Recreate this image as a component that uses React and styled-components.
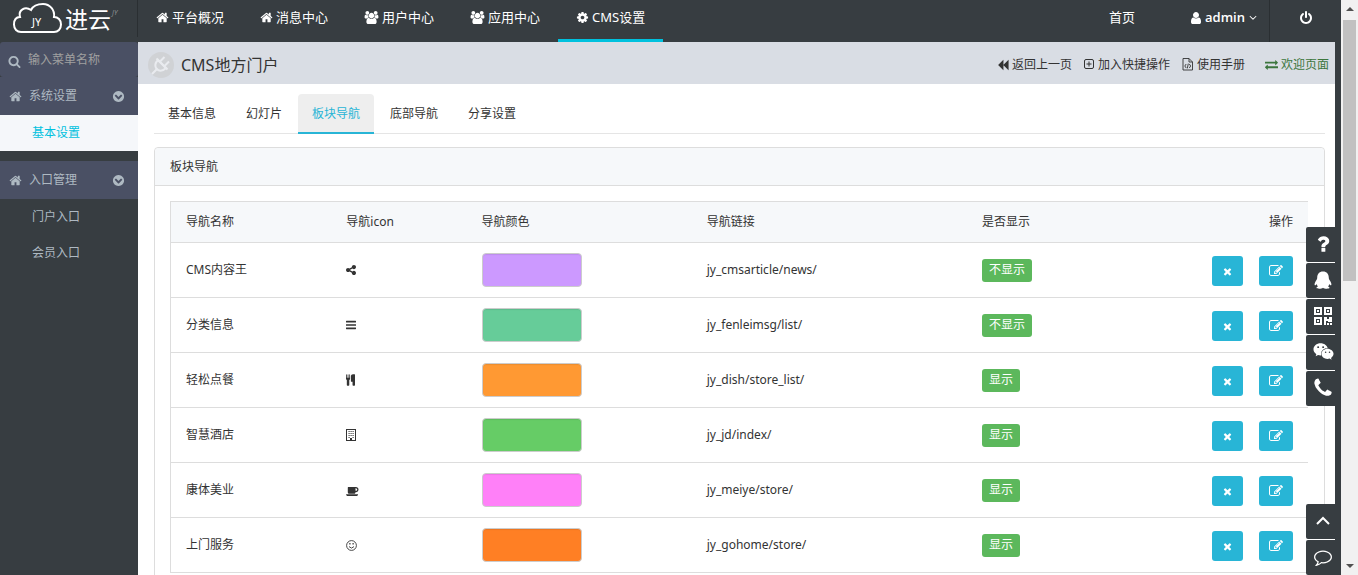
import styled, { createGlobalStyle } from 'styled-components';
import { FaWeixin } from 'react-icons/fa';

const GlobalStyle = createGlobalStyle`
  * {
    box-sizing: border-box;
  }

  body {
    margin: 0;
    overflow: hidden;
    color: #333333;
    background: #373d41;
    font-family: "Noto Sans", "Noto Sans CJK SC", sans-serif;
    font-size: 12px;
    line-height: 18px;
  }

  a {
    color: inherit;
    text-decoration: none;
  }

  button, input {
    font: inherit;
  }
`;

const paths = {
  home: 'M1472 992v480q0 26-19 45t-45 19h-384v-384h-256v384h-384q-26 0-45-19t-19-45v-480q0-1 .5-3t.5-3l575-474 575 474q1 2 1 6zm223-69l-62 74q-8 9-21 11h-3q-13 0-21-7l-692-577-692 577q-12 8-24 7-13-2-21-11l-62-74q-8-10-7-23.5t11-21.5l719-599q32-26 76-26t76 26l244 204v-195q0-14 9-23t23-9h192q14 0 23 9t9 23v408l219 182q10 8 11 21.5t-7 23.5z',
  users: 'M657 896q-162 5-265 128h-134q-82 0-138-40.5t-56-118.5q0-353 124-353 6 0 43.5 21t97.5 42.5 119 21.5q67 0 133-23-5 37-5 66 0 139 81 256zm1071 637q0 120-73 189.5t-194 69.5h-874q-121 0-194-69.5t-73-189.5q0-53 3.5-103.5t14-109 26.5-108.5 43-97.5 62-81 85.5-53.5 111.5-20q10 0 43 21.5t73 48 107 48 135 21.5 135-21.5 107-48 73-48 43-21.5q61 0 111.5 20t85.5 53.5 62 81 43 97.5 26.5 108.5 14 109 3.5 103.5zm-1024-1277q0 106-75 181t-181 75-181-75-75-181 75-181 181-75 181 75 75 181zm704 384q0 159-112.5 271.5t-271.5 112.5-271.5-112.5-112.5-271.5 112.5-271.5 271.5-112.5 271.5 112.5 112.5 271.5zm576 225q0 78-56 118.5t-138 40.5h-134q-103-123-265-128 81-117 81-256 0-29-5-66 66 23 133 23 59 0 119-21.5t97.5-42.5 43.5-21q124 0 124 353zm-128-609q0 106-75 181t-181 75-181-75-75-181 75-181 181-75 181 75 75 181z',
  cog: 'M1152 896q0-106-75-181t-181-75-181 75-75 181 75 181 181 75 181-75 75-181zm512-109v222q0 12-8 23t-20 13l-185 28q-19 54-39 91 35 50 107 138 10 12 10 25t-9 23q-27 37-99 108t-94 71q-12 0-26-9l-138-108q-44 23-91 38-16 136-29 186-7 28-36 28h-222q-14 0-24.5-8.5t-11.5-21.5l-28-184q-49-16-90-37l-141 107q-10 9-25 9-14 0-25-11-126-114-165-168-7-10-7-23 0-12 8-23 15-21 51-66.5t54-70.5q-27-50-41-99l-183-27q-13-2-21-12.5t-8-23.5v-222q0-12 8-23t19-13l186-28q14-46 39-92-40-57-107-138-10-12-10-24 0-10 9-23 26-36 98.5-107.5t94.5-71.5q13 0 26 10l138 107q44-23 91-38 16-136 29-186 7-28 36-28h222q14 0 24.5 8.5t11.5 21.5l28 184q49 16 90 37l142-107q9-9 24-9 13 0 25 10 129 119 165 170 7 8 7 22 0 12-8 23-15 21-51 66.5t-54 70.5q26 50 41 98l183 28q13 2 21 12.5t8 23.5z',
  user: 'M1536 1399q0 109-62.5 187t-150.5 78h-854q-88 0-150.5-78t-62.5-187q0-85 8.5-160.5t31.5-152 58.5-131 94-89 134.5-34.5q131 128 313 128t313-128q76 0 134.5 34.5t94 89 58.5 131 31.5 152 8.5 160.5zm-256-887q0 159-112.5 271.5t-271.5 112.5-271.5-112.5-112.5-271.5 112.5-271.5 271.5-112.5 271.5 112.5 112.5 271.5z',
  angleDown: 'M1395 736q0 13-10 23l-466 466q-10 10-23 10t-23-10l-466-466q-10-10-10-23t10-23l50-50q10-10 23-10t23 10l393 393 393-393q10-10 23-10t23 10l50 50q10 10 10 23z',
  power: 'M1664 896q0 156-61 298t-164 245-245 164-298 61-298-61-245-164-164-245-61-298q0-182 80.5-343t226.5-270q43-32 95.5-25t83.5 50q32 42 24.5 94.5t-49.5 84.5q-98 74-151.5 181t-53.5 228q0 104 40.5 198.5t109.5 163.5 163.5 109.5 198.5 40.5 198.5-40.5 163.5-109.5 109.5-163.5 40.5-198.5q0-121-53.5-228t-151.5-181q-42-32-49.5-84.5t24.5-94.5q31-43 84-50t95 25q146 109 226.5 270t80.5 343zm-640-768v640q0 52-38 90t-90 38-90-38-38-90v-640q0-52 38-90t90-38 90 38 38 90z',
  search: 'M1216 832q0-185-131.5-316.5t-316.5-131.5-316.5 131.5-131.5 316.5 131.5 316.5 316.5 131.5 316.5-131.5 131.5-316.5zm512 832q0 52-38 90t-90 38q-54 0-90-38l-343-342q-179 124-399 124-143 0-273.5-55.5t-225-150-150-225-55.5-273.5 55.5-273.5 150-225 225-150 273.5-55.5 273.5 55.5 225 150 150 225 55.5 273.5q0 220-124 399l343 343q37 37 37 90z',
  share: 'M1344 1024q133 0 226.5 93.5t93.5 226.5-93.5 226.5-226.5 93.5-226.5-93.5-93.5-226.5q0-12 2-34l-360-180q-92 86-218 86-133 0-226.5-93.5t-93.5-226.5 93.5-226.5 226.5-93.5q126 0 218 86l360-180q-2-22-2-34 0-133 93.5-226.5t226.5-93.5 226.5 93.5 93.5 226.5-93.5 226.5-226.5 93.5q-126 0-218-86l-360 180q2 22 2 34t-2 34l360 180q92-86 218-86z',
  bars: 'M1664 1344v128q0 26-19 45t-45 19h-1408q-26 0-45-19t-19-45v-128q0-26 19-45t45-19h1408q26 0 45 19t19 45zm0-512v128q0 26-19 45t-45 19h-1408q-26 0-45-19t-19-45v-128q0-26 19-45t45-19h1408q26 0 45 19t19 45zm0-512v128q0 26-19 45t-45 19h-1408q-26 0-45-19t-19-45v-128q0-26 19-45t45-19h1408q26 0 45 19t19 45z',
  cutlery: 'M832 64v640q0 61-35.5 111t-92.5 70v779q0 52-38 90t-90 38h-128q-52 0-90-38t-38-90v-779q-57-20-92.5-70t-35.5-111v-640q0-26 19-45t45-19 45 19 19 45v416q0 26 19 45t45 19 45-19 19-45v-416q0-26 19-45t45-19 45 19 19 45v416q0 26 19 45t45 19 45-19 19-45v-416q0-26 19-45t45-19 45 19 19 45zm768 0v1600q0 52-38 90t-90 38h-128q-52 0-90-38t-38-90v-512h-224q-13 0-22.5-9.5t-9.5-22.5v-800q0-132 94-226t226-94h256q26 0 45 19t19 45z',
  coffee: 'M1664 832q0-80-56-136t-136-56h-64v384h64q80 0 136-56t56-136zm-1664 704h1792q0 106-75 181t-181 75h-1280q-106 0-181-75t-75-181zm1856-704q0 159-112.5 271.5t-271.5 112.5h-64v32q0 92-66 158t-158 66h-704q-92 0-158-66t-66-158v-736q0-26 19-45t45-19h1152q159 0 271.5 112.5t112.5 271.5z',
  times: 'M1490 1322q0 40-28 68l-136 136q-28 28-68 28t-68-28l-294-294-294 294q-28 28-68 28t-68-28l-136-136q-28-28-28-68t28-68l294-294-294-294q-28-28-28-68t28-68l136-136q28-28 68-28t68 28l294 294 294-294q28-28 68-28t68 28l136 136q28 28 28 68t-28 68l-294 294 294 294q28 28 28 68z',
  edit: 'M888 1184l116-116-152-152-116 116v56h96v96h56zm440-720q-16-16-33 1l-350 350q-17 17-1 33t33-1l350-350q17-17 1-33zm80 594v190q0 119-84.5 203.5t-203.5 84.5h-832q-119 0-203.5-84.5t-84.5-203.5v-832q0-119 84.5-203.5t203.5-84.5h832q63 0 117 25 15 7 18 23 3 17-9 29l-49 49q-14 14-32 8-23-6-45-6h-832q-66 0-113 47t-47 113v832q0 66 47 113t113 47h832q66 0 113-47t47-113v-126q0-13 9-22l64-64q15-15 35-7t20 29zm-96-738l288 288-672 672h-288v-288zm444 132l-92 92-288-288 92-92q28-28 68-28t68 28l152 152q28 28 28 68t-28 68z',
  backward: 'M1683 141q19-19 32-13t13 32v1472q0 26-13 32t-32-13l-710-710q-9-9-13-19v710q0 26-13 32t-32-13l-710-710q-19-19-19-45t19-45l710-710q19-19 32-13t13 32v710q4-10 13-19z',
  exchange: 'M1792 1184v192q0 13-9.5 22.5t-22.5 9.5h-1376v192q0 13-9.5 22.5t-22.5 9.5q-12 0-24-10l-319-320q-9-9-9-22 0-14 9-23l320-320q9-9 23-9 13 0 22.5 9.5t9.5 22.5v192h1376q13 0 22.5 9.5t9.5 22.5zm0-544q0 14-9 23l-320 320q-9 9-23 9-13 0-22.5-9.5t-9.5-22.5v-192h-1376q-13 0-22.5-9.5t-9.5-22.5v-192q0-13 9.5-22.5t22.5-9.5h1376v-192q0-14 9-23t23-9q12 0 24 10l319 319q9 9 9 23z',
  comment: 'M896 384q-204 0-381.5 69.5t-282 187.5-104.5 255q0 112 71.5 213.5t201.5 175.5l87 50-27 96q-24 91-70 172 152-63 275-171l43-38 57 6q69 8 130 8 204 0 381.5-69.5t282-187.5 104.5-255-104.5-255-282-187.5-381.5-69.5zm896 512q0 174-120 321.5t-326 233-450 85.5q-70 0-145-8-198 175-460 242-49 14-114 22h-5q-15 0-27-10.5t-16-27.5v-1q-3-4-.5-12t2-10 4.5-9.5l6-9 7-8.5 8-9q7-8 31-34.5t34.5-38 31-39.5 32.5-51 27-59 26-76q-157-89-247.5-220t-90.5-281q0-174 120-321.5t326-233 450-85.5 450 85.5 326 233 120 321.5z',
  phone: 'M1600 1240q0 27-10 70.5t-21 68.5q-21 50-122 106-94 51-186 51-27 0-53-3.5t-57.5-12.5-47-14.5-55.5-20.5-49-18q-98-35-175-83-127-79-264-216t-216-264q-48-77-83-175-3-9-18-49t-20.5-55.5-14.5-47-12.5-57.5-3.5-53q0-92 51-186 56-101 106-122 25-11 68.5-21t70.5-10q14 0 21 3 18 6 53 76 11 19 30 54t35 63.5 31 53.5q3 4 17.5 25t21.5 35.5 7 28.5q0 20-28.5 50t-62 55-62 53-28.5 46q0 9 5 22.5t8.5 20.5 14 24 11.5 19q76 137 174 235t235 174q2 1 19 11.5t24 14 20.5 8.5 22.5 5q18 0 46-28.5t53-62 55-62 50-28.5q14 0 28.5 7t35.5 21.5 25 17.5q25 15 53.5 31t63.5 35 54 30q70 35 76 53 3 7 3 21z',
  question: 'M1088 1256v240q0 16-12 28t-28 12h-240q-16 0-28-12t-12-28v-240q0-16 12-28t28-12h240q16 0 28 12t12 28zm316-600q0 54-15.5 101t-35 76.5-55 59.5-57.5 43.5-61 35.5q-41 23-68.5 65t-27.5 67q0 17-12 32.5t-28 15.5h-240q-15 0-25.5-18.5t-10.5-37.5v-45q0-83 65-156.5t143-108.5q59-27 84-56t25-76q0-42-46.5-74t-107.5-32q-65 0-108 29-35 25-107 115-13 16-31 16-12 0-25-8l-164-125q-13-10-15.5-25t5.5-28q160-266 464-266 80 0 161 31t146 83 106 127.5 41 158.5z',
  circleDown: 'M941 1293l454-454q19-19 19-45t-19-45l-102-102q-19-19-45-19t-45 19l-307 307-307-307q-19-19-45-19t-45 19l-102 102q-19 19-19 45t19 45l454 454q19 19 45 19t45-19zm723-397q0 209-103 385.5t-279.5 279.5-385.5 103-385.5-103-279.5-279.5-103-385.5 103-385.5 279.5-279.5 385.5-103 385.5 103 279.5 279.5 103 385.5z',
};

// left edge and width of the glyphs that are not 1792 units wide
const boxes = {
  users: [0, 2048],
  coffee: [0, 1920],
  user: [256, 1280],
  angleDown: [320, 1152],
  share: [128, 1536],
  bars: [128, 1536],
  cutlery: [192, 1408],
};

function Icon({ name, size = 14 }) {
  const [x, w] = boxes[name] || [0, 1792];
  return (
    <svg
      width={Math.round((size * w) / 1792)}
      height={size}
      viewBox={`${x} 0 ${w} 1792`}
      fill="currentColor"
      aria-hidden="true"
    >
      <path d={paths[name]} />
    </svg>
  );
}

function PlusSquareIcon() {
  return (
    <svg width="11" height="11" viewBox="0 0 11 11" fill="none" stroke="currentColor" aria-hidden="true">
      <rect x="0.5" y="0.5" width="9" height="9" rx="1.5" />
      <path d="M5 2.5v5M2.5 5h5" />
    </svg>
  );
}

function FileCodeIcon() {
  return (
    <svg width="12" height="13" viewBox="0 0 12 13" fill="none" stroke="currentColor" strokeWidth="0.9" aria-hidden="true">
      <path d="M1 0.5h6l3.5 3.5v8h-9.5zM7 0.5v3.5h3.5M4.2 6l-1.4 2 1.4 2M7.3 6l1.4 2-1.4 2M6.3 5.6l-1 4.8" />
    </svg>
  );
}

function BuildingIcon() {
  return (
    <svg width="11" height="12" viewBox="0 0 11 12" aria-hidden="true">
      <rect x="0.5" y="0.5" width="9" height="11" fill="none" stroke="currentColor" />
      <path
        d="M2.5 2.5h1.2M4.5 2.5h1.2M6.5 2.5h1.2M2.5 4.5h1.2M4.5 4.5h1.2M6.5 4.5h1.2M2.5 6.5h1.2M4.5 6.5h1.2M6.5 6.5h1.2M2.5 8.5h1.2M6.5 8.5h1.2"
        stroke="currentColor"
        strokeWidth="0.9"
      />
      <path d="M4 9h2v3h-2z" fill="currentColor" />
    </svg>
  );
}

function SmileIcon() {
  return (
    <svg width="11" height="11" viewBox="0 0 11 11" fill="none" stroke="currentColor" strokeWidth="0.9" aria-hidden="true">
      <circle cx="5.5" cy="5.5" r="4.9" />
      <path d="M3 6.6q2.5 3 5 0" />
      <path d="M3.9 3v1.6M7.1 3v1.6" strokeWidth="1.2" />
    </svg>
  );
}

function PlugIcon() {
  return (
    <svg width="20" height="20" viewBox="0 0 20 20" fill="none" stroke="currentColor" strokeWidth="2" aria-hidden="true">
      <path d="M7 5l8 8q-4 4-8 2l-2-2q-2-4 2-8z" />
      <path d="M5.500 3.500l11 11M9.500 6l4-4M14 10.500l4-4M6 14l-5 5" />
    </svg>
  );
}

function QqIcon() {
  return (
    <svg width="18" height="18" viewBox="0 0 18 18" fill="currentColor" aria-hidden="true">
      <path d="M9 0.500C5.200 0.500 3.200 3.200 3.200 6.700C3.200 8 2.500 8.800 1.800 10C0.600 12 0.200 13.800 0.900 14.300C1.500 14.600 2.200 13.700 2.700 13C3 14.200 3.400 14.800 4 15.400C3 15.800 2.300 16.300 2.500 17C2.900 17.900 7.800 17.900 9 16.700C10.200 17.900 15.100 17.900 15.500 17C15.700 16.300 15 15.800 14 15.400C14.600 14.800 15 14.200 15.300 13C15.800 13.700 16.500 14.600 17.100 14.300C17.800 13.800 17.400 12 16.200 10C15.500 8.800 14.800 8 14.800 6.700C14.800 3.200 12.800 0.500 9 0.500Z" />
    </svg>
  );
}

function QrIcon() {
  return (
    <svg width="18" height="18" viewBox="0 0 18 18" fill="none" stroke="currentColor" strokeWidth="2" aria-hidden="true">
      <path d="M1 1h6v6h-6zM11 1h6v6h-6zM1 11h6v6h-6z" />
      <path d="M3 3h2v2h-2zM13 3h2v2h-2zM3 13h2v2h-2zM10 10h3v2h2v-2h3v5h-4v-1h-2v4h-2zM13 16h2v2h-2zM16 16h2v2h-2z" fill="currentColor" stroke="none" />
    </svg>
  );
}

function AngleUpIcon() {
  return (
    <svg width="14" height="10" viewBox="0 0 14 10" fill="none" stroke="currentColor" strokeWidth="2" aria-hidden="true">
      <path d="M1 8l6-6 6 6" />
    </svg>
  );
}

const Window = styled.div`
  display: flex;
  height: 100vh;
  overflow: hidden;
`;

const Page = styled.div`
  flex: 1;
  min-width: 0;
  display: flex;
  flex-direction: column;
`;

const Header = styled.header`
  display: flex;
  flex: none;
  height: 42px;
  color: #ffffff;
  background: #373d41;
  font-size: 13px;
`;

const Brand = styled.a`
  width: 138px;
  height: 37px;
  border-right: 1px solid #2a2f32;
`;

const MainNav = styled.nav`
  display: flex;
  flex: 1;
`;

const NavLink = styled.a`
  display: flex;
  gap: 3px;
  height: 42px;
  padding: 8px 18px 0;
  border-bottom: 3px solid ${({ $active }) => ($active ? '#00c1de' : 'transparent')};

  svg {
    flex: none;
    margin-top: 3px;
  }
`;

const UserLink = styled(NavLink)`
  gap: 4px;
  padding: 8px 12px 0 38px;
  font-family: "Open Sans", sans-serif;
  font-weight: 600;
`;

const LogoutButton = styled.button`
  width: 72px;
  padding: 0 0 7px;
  color: inherit;
  background: none;
  border: 0;
  border-left: 1px solid #2a2f32;

  svg {
    display: block;
    margin: 0 auto;
  }
`;

const Body = styled.div`
  display: flex;
  flex: 1;
  min-height: 0;
`;

const Sidebar = styled.aside`
  flex: none;
  width: 138px;
  color: #aeb9c2;
  background: #373d41;
`;

const SearchBox = styled.label`
  display: flex;
  align-items: center;
  gap: 7px;
  height: 35px;
  padding: 0 8px;
  background: #4a5064;
  border-radius: 3px;

  svg {
    margin-top: 4px;
  }
`;

const SearchInput = styled.input`
  width: 90px;
  padding: 0;
  color: inherit;
  background: none;
  border: 0;
  outline: 0;

  &::placeholder {
    color: #a0a0a0;
    opacity: 1;
  }
`;

const MenuGroup = styled.section`
  margin-bottom: 10px;
`;

const MenuHeader = styled.button`
  display: flex;
  align-items: center;
  gap: 7px;
  width: 100%;
  height: 38px;
  padding: 0 13px 0 9px;
  color: inherit;
  background: #4a5064;
  border: 0;
  text-align: left;

  span {
    flex: 1;
  }
`;

const MenuLink = styled.a`
  display: block;
  height: 36px;
  padding-left: 32px;
  line-height: 36px;
  color: ${({ $active }) => ($active ? '#00c1de' : '#aeb9c2')};
  background: ${({ $active }) => ($active ? '#f5f7fa' : 'transparent')};
`;

const Main = styled.main`
  flex: 1;
  min-width: 0;
  margin-right: 6px;
  background: #ffffff;
`;

const TitleBar = styled.div`
  display: flex;
  align-items: center;
  height: 42px;
  padding: 3px 6px 0 10px;
  background: #d9dde4;
`;

const TitleIcon = styled.span`
  display: grid;
  place-items: center;
  width: 26px;
  height: 26px;
  margin-right: 7px;
  color: #e9ebef;
  background: #d0d2d5;
  border-radius: 50%;
`;

const Title = styled.h1`
  flex: 1;
  margin: 0;
  font-size: 16px;
  font-weight: 400;
  line-height: 24px;
`;

const TitleAction = styled.a`
  display: flex;
  align-items: center;
  gap: 3px;
  margin-left: ${({ $apart }) => ($apart ? 20 : 12)}px;
  color: ${({ $apart }) => ($apart ? '#3c763d' : '#333333')};
`;

const Tabs = styled.nav`
  display: flex;
  gap: 2px;
  margin: 10px 10px 0 16px;
  border-bottom: 1px solid #e5e5e5;
`;

const Tab = styled.a`
  height: 40px;
  margin-bottom: -1px;
  padding: 0 14px;
  line-height: 40px;
  border-radius: 4px 4px 0 0;
  ${({ $active }) =>
    $active &&
    `
    color: #28b5d6;
    background: #eeeeee;
    border-bottom: 2px solid #28b5d6;
  `}
`;

const Panel = styled.section`
  margin: 13px 10px 0 16px;
  border: 1px solid #dddddd;
  border-radius: 4px;
`;

const PanelTitle = styled.h2`
  margin: 0;
  padding: 0 15px;
  font-size: 12px;
  font-weight: 400;
  line-height: 37px;
  background: #f6f8fa;
  border-bottom: 1px solid #dddddd;
  border-radius: 4px 4px 0 0;
`;

const PanelBody = styled.div`
  padding: 15px 16px 15px 15px;
`;

const NavTable = styled.table`
  width: 100%;
  table-layout: fixed;
  border-collapse: separate;
  border-spacing: 0;
  border-left: 1px solid #dddddd;

  th, td {
    padding: 0 15px;
    text-align: left;
    border-bottom: 1px solid #dddddd;
  }

  th {
    height: 42px;
    font-weight: 400;
    background: #f6f8fa;
    border-top: 1px solid #dddddd;
  }

  td {
    height: 55px;
  }

  th:last-child {
    text-align: right;
  }

  td svg {
    display: block;
  }
`;

const Col = styled.col`
  width: ${({ $width }) => $width};
`;

const Swatch = styled.div`
  width: 100px;
  height: 34px;
  background: ${({ $color }) => $color};
  border: 1px solid #cccccc;
  border-radius: 4px;
  box-shadow: inset 0 1px 1px rgba(0, 0, 0, 0.08);
`;

const Status = styled.span`
  display: inline-block;
  height: 23px;
  padding: 0 7px;
  color: #ffffff;
  background: #5cb85c;
  border-radius: 3px;
  line-height: 22px;
  vertical-align: middle;
`;

const Actions = styled.div`
  display: flex;
  justify-content: flex-end;
  gap: 16px;
  padding-top: 2px;
`;

const ActionButton = styled.button`
  display: grid;
  place-items: center;
  height: 30px;
  padding: 0 10px;
  color: #ffffff;
  background: #28b5d6;
  border: 0;
  border-radius: 3px;
`;

const Dock = styled.div`
  position: fixed;
  right: 23px;
  ${({ $bottom }) => ($bottom ? 'bottom: 0;' : 'top: 227px;')}
  display: flex;
  flex-direction: column;
  gap: 1px;
  background: #ffffff;
`;

const DockButton = styled.button`
  display: grid;
  place-items: center;
  width: 29px;
  height: 35px;
  padding: 0 0 2px 5px;
  color: #ffffff;
  background: #373d41;
  border: 0;
  border-radius: 2px 0 0 2px;
`;

const Scrollbar = styled.div`
  display: flex;
  flex-direction: column;
  align-items: center;
  flex: none;
  width: 17px;
  padding: 7px 0;
  background: #f1f1f1;
`;

const ScrollArrow = styled.span`
  border: 4px solid transparent;
  border-top-width: ${({ $down }) => ($down ? 4 : 0)}px;
  border-bottom-width: ${({ $down }) => ($down ? 0 : 4)}px;
  ${({ $down }) => ($down ? 'border-top-color' : 'border-bottom-color')}: #505050;
`;

const ScrollTrack = styled.div`
  flex: 1;
  width: 13px;
  padding-top: 9px;
`;

const ScrollThumb = styled.div`
  height: 48%;
  background: #c1c1c1;
`;

const mainLinks = [
  { icon: 'home', label: '平台概况' },
  { icon: 'home', label: '消息中心' },
  { icon: 'users', label: '用户中心' },
  { icon: 'users', label: '应用中心' },
  { icon: 'cog', label: 'CMS设置', active: true },
];

const menu = [
  { title: '系统设置', links: ['基本设置'] },
  { title: '入口管理', links: ['门户入口', '会员入口'] },
];

const tabs = ['基本信息', '幻灯片', '板块导航', '底部导航', '分享设置'];

const rows = [
  { name: 'CMS内容王', icon: <Icon name="share" size={12} />, color: '#cc99ff', link: 'jy_cmsarticle/news/', shown: false },
  { name: '分类信息', icon: <Icon name="bars" size={12} />, color: '#66cc99', link: 'jy_fenleimsg/list/', shown: false },
  { name: '轻松点餐', icon: <Icon name="cutlery" size={12} />, color: '#ff9933', link: 'jy_dish/store_list/', shown: true },
  { name: '智慧酒店', icon: <BuildingIcon />, color: '#66cc66', link: 'jy_jd/index/', shown: true },
  { name: '康体美业', icon: <Icon name="coffee" size={12} />, color: '#ff80f8', link: 'jy_meiye/store/', shown: true },
  { name: '上门服务', icon: <SmileIcon />, color: '#ff7f24', link: 'jy_gohome/store/', shown: true },
];

function Logo() {
  return (
    <svg width="137" height="37" viewBox="0 0 137 37" aria-label="进云">
      <path
        d="M21 32H54C58 32 61 29 61 24.500C61 20 58 17 54 17C55 10 50 4 43 4C37 4 33 6 31 10C25 6 18 10 20 17C16 17 14 20 14 24.500C14 29 17 32 21 32Z"
        fill="none"
        stroke="#ffffff"
        strokeWidth="2"
      />
      <text x="32" y="26" fill="#ffffff" fontSize="11">JY</text>
      <text x="65" y="28" fill="#ffffff" fontSize="23">进云</text>
      <text x="112" y="15" fill="#8a8e91" fontSize="7" fontStyle="italic">JY</text>
    </svg>
  );
}

function TopBar() {
  return (
    <Header>
      <Brand href="#"><Logo /></Brand>
      <MainNav>
        {mainLinks.map((link) => (
          <NavLink key={link.label} href="#" $active={link.active}>
            <Icon name={link.icon} size={13} />
            {link.label}
          </NavLink>
        ))}
      </MainNav>
      <NavLink href="#">首页</NavLink>
      <UserLink href="#">
        <Icon name="user" size={14} />
        admin
        <Icon name="angleDown" size={13} />
      </UserLink>
      <LogoutButton aria-label="退出"><Icon name="power" size={14} /></LogoutButton>
    </Header>
  );
}

function SideMenu() {
  return (
    <Sidebar>
      <SearchBox>
        <Icon name="search" size={13} />
        <SearchInput placeholder="输入菜单名称" aria-label="输入菜单名称" />
      </SearchBox>
      {menu.map((group) => (
        <MenuGroup key={group.title}>
          <MenuHeader>
            <Icon name="home" size={13} />
            <span>{group.title}</span>
            <Icon name="circleDown" size={13} />
          </MenuHeader>
          {group.links.map((link) => (
            <MenuLink key={link} href="#" $active={link === '基本设置'}>{link}</MenuLink>
          ))}
        </MenuGroup>
      ))}
    </Sidebar>
  );
}

function NavigationTable() {
  return (
    <NavTable>
      <colgroup>
        <Col $width="14.1%" />
        <Col $width="11.9%" />
        <Col $width="19.8%" />
        <Col $width="24.2%" />
        <Col $width="14.3%" />
        <Col />
      </colgroup>
      <thead>
        <tr>
          <th>导航名称</th>
          <th>导航icon</th>
          <th>导航颜色</th>
          <th>导航链接</th>
          <th>是否显示</th>
          <th>操作</th>
        </tr>
      </thead>
      <tbody>
        {rows.map((row) => (
          <tr key={row.name}>
            <td>{row.name}</td>
            <td>{row.icon}</td>
            <td><Swatch $color={row.color} /></td>
            <td>{row.link}</td>
            <td><Status>{row.shown ? '显示' : '不显示'}</Status></td>
            <td>
              <Actions>
                <ActionButton aria-label="删除"><Icon name="times" size={11} /></ActionButton>
                <ActionButton aria-label="编辑"><Icon name="edit" size={14} /></ActionButton>
              </Actions>
            </td>
          </tr>
        ))}
      </tbody>
    </NavTable>
  );
}

export default function App() {
  return (
    <Window>
      <GlobalStyle />
      <Page>
        <TopBar />
        <Body>
          <SideMenu />
          <Main>
            <TitleBar>
              <TitleIcon><PlugIcon /></TitleIcon>
              <Title>CMS地方门户</Title>
              <TitleAction href="#"><Icon name="backward" size={12} />返回上一页</TitleAction>
              <TitleAction href="#"><PlusSquareIcon />加入快捷操作</TitleAction>
              <TitleAction href="#"><FileCodeIcon />使用手册</TitleAction>
              <TitleAction href="#" $apart><Icon name="exchange" size={13} />欢迎页面</TitleAction>
            </TitleBar>
            <Tabs>
              {tabs.map((tab) => (
                <Tab key={tab} href="#" $active={tab === '板块导航'}>{tab}</Tab>
              ))}
            </Tabs>
            <Panel>
              <PanelTitle>板块导航</PanelTitle>
              <PanelBody>
                <NavigationTable />
              </PanelBody>
            </Panel>
          </Main>
        </Body>
      </Page>
      <Scrollbar>
        <ScrollArrow />
        <ScrollTrack><ScrollThumb /></ScrollTrack>
        <ScrollArrow $down />
      </Scrollbar>
      <Dock>
        <DockButton aria-label="帮助"><Icon name="question" size={22} /></DockButton>
        <DockButton aria-label="QQ"><QqIcon /></DockButton>
        <DockButton aria-label="二维码"><QrIcon /></DockButton>
        <DockButton aria-label="微信"><FaWeixin size={21} /></DockButton>
        <DockButton aria-label="电话"><Icon name="phone" size={22} /></DockButton>
      </Dock>
      <Dock $bottom>
        <DockButton aria-label="返回顶部"><AngleUpIcon /></DockButton>
        <DockButton aria-label="留言"><Icon name="comment" size={18} /></DockButton>
      </Dock>
    </Window>
  );
}
